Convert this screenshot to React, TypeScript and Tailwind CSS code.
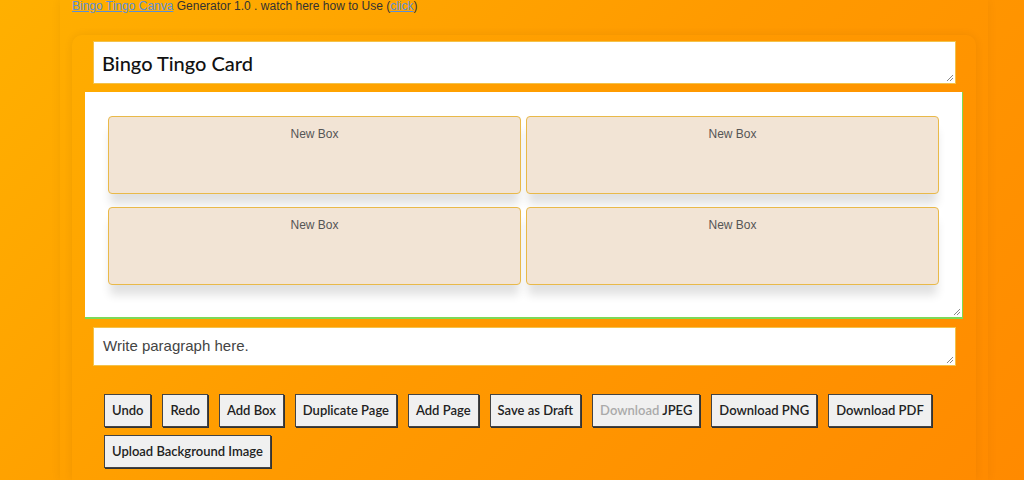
import React from 'react'

const buttons = ['Undo', 'Redo', 'Add Box', 'Duplicate Page', 'Add Page', 'Save as Draft', 'JPEG', 'Download PNG', 'Download PDF', 'Upload Background Image']

function Grip() {
  return (
    <svg className="absolute right-[1px] bottom-[1px]" width="9" height="9" viewBox="0 0 9 9">
      <path d="M8 2 L2 8 M8 5 L5 8" stroke="#888" strokeWidth="1" />
    </svg>
  )
}

function Box() {
  return (
    <div className="h-[78px] rounded-[4px] border border-[#e9b949] bg-[#f2e4d5] pt-[8px] text-center text-[12px] text-[#555] shadow-[0_12px_10px_-2px_rgba(0,0,0,0.12)]">
      New Box
    </div>
  )
}

export default function App() {
  return (
    <div
      className="min-h-[480px] w-full overflow-hidden bg-[linear-gradient(135deg,#ffb000_0%,#ff9a00_50%,#ff8a00_100%)]"
      style={{ fontFamily: '"Liberation Sans", Arial, sans-serif' }}
    >
      <div className="ml-[60px] h-[480px] w-[928px] px-[12px] shadow-[0_0_10px_rgba(0,0,0,0.06)]">
        {/* header line */}
        <div className="h-[35px] text-[12px] leading-[13px] text-[#333]">
          <a href="#" className="text-[#5b8fd9] underline">Bingo Tingo Canva</a> Generator 1.0 . watch here how to Use (
          <a href="#" className="text-[#5b8fd9] underline">click</a>)
        </div>

        <div className="h-[445px] rounded-t-[10px] px-[13px] pt-[6px] shadow-[0_0_10px_rgba(0,0,0,0.07)]">
          {/* title */}
          <div
            className="relative ml-[8px] mr-[7px] flex h-[43px] items-center border border-[#f3c24a] bg-white pl-[8px] text-[20px] font-medium text-[#111]"
            style={{ fontFamily: 'Lato, sans-serif' }}
          >
            Bingo Tingo Card
            <Grip />
          </div>

          {/* canvas */}
          <div className="relative mt-[8px] h-[227px] border-r border-b-2 border-[#7ed957] bg-white px-[23px] pt-[24px]">
            <div className="grid grid-cols-2 gap-x-[5px] gap-y-[13px]">
              <Box />
              <Box />
              <Box />
              <Box />
            </div>
            <Grip />
          </div>

          {/* paragraph */}
          <div className="relative ml-[8px] mr-[7px] mt-[8px] flex h-[39px] items-center border border-[#f3c24a] bg-white pl-[9px] text-[15px] text-[#444]">
            Write paragraph here.
            <Grip />
          </div>

          {/* buttons */}
          <div className="mt-[28px] flex flex-wrap gap-x-[11px] gap-y-[8px] pl-[19px]" style={{ fontFamily: 'Lato, sans-serif' }}>
            {buttons.map((b) => (
              <button
                key={b}
                className="h-[33px] border border-[#444] bg-[#f0f0f0] px-[7px] text-[13px] font-semibold text-[#222] shadow-[1px_1px_0_#333]"
              >
                {b === 'JPEG' ? (
                  <>
                    <span className="text-[#aaa]">Download</span> JPEG
                  </>
                ) : (
                  b
                )}
              </button>
            ))}
          </div>
        </div>
      </div>
    </div>
  )
}
